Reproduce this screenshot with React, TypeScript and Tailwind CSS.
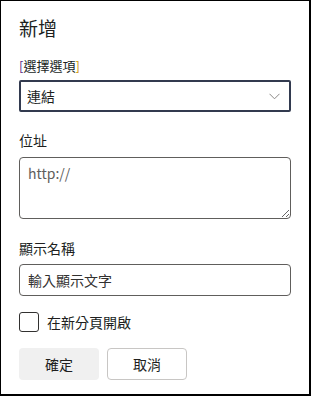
import React from "react";

export default function App() {
  const font = { fontFamily: '"Noto Sans CJK TC", "Noto Sans", sans-serif' };
  return (
    <div
      className="w-[311px] h-[396px] bg-white border-l border-t border-r-2 border-b-2 border-black box-border text-[#201f1e] flex flex-col px-[18px]"
      style={font}
    >
      <div className="text-[19px] leading-[26px] mt-[14px] h-[26px] shrink-0">新增</div>
      <div className="text-[13px] leading-[18px] mt-[16px] h-[18px] shrink-0 flex items-center">
        <span className="text-[#5b2a86]">[</span>
        <span>選擇選項</span>
        <span className="text-[#d29200]">]</span>
      </div>
      <div className="mt-[5px] h-[32px] shrink-0 border-2 border-[#323a4f] rounded-[2px] flex items-center justify-between pl-[6px] pr-[9px] text-[14px] leading-[20px]">
        <span>連結</span>
        <svg width="11" height="7" viewBox="0 0 11 7" fill="none">
          <path d="M0.5 0.8 L5.5 5.8 L10.5 0.8" stroke="#8a8886" strokeWidth="1" />
        </svg>
      </div>
      <div className="text-[14px] leading-[18px] h-[18px] shrink-0 mt-[19px]">位址</div>
      <textarea
        className="mt-[8px] h-[62px] shrink-0 border border-[#605e5c] rounded-[4px] px-[8px] py-[5px] text-[14px] leading-[20px] placeholder:text-[#605e5c] outline-none resize-y"
        placeholder="http://"
        style={font}
      />
      <div className="text-[14px] leading-[18px] h-[18px] shrink-0 mt-[20px]">顯示名稱</div>
      <div className="mt-[7px] h-[32px] shrink-0 border border-[#605e5c] rounded-[4px] flex items-center px-[8px] text-[14px] leading-[20px] text-[#323130]">
        輸入顯示文字
      </div>
      <div className="mt-[16px] h-[20px] shrink-0 flex items-center gap-[8px]">
        <div className="w-[20px] h-[20px] border border-[#323130] rounded-[3px]"></div>
        <span className="text-[14px] leading-[20px]">在新分頁開啟</span>
      </div>
      <div className="mt-[16px] h-[32px] shrink-0 flex gap-[8px]">
        <div className="w-[80px] h-[32px] bg-[#f0f0f0] rounded-[4px] flex items-center justify-center text-[14px] leading-[20px]">確定</div>
        <div className="w-[80px] h-[32px] border border-[#c8c6c4] rounded-[4px] flex items-center justify-center text-[14px] leading-[20px]">取消</div>
      </div>
    </div>
  );
}
